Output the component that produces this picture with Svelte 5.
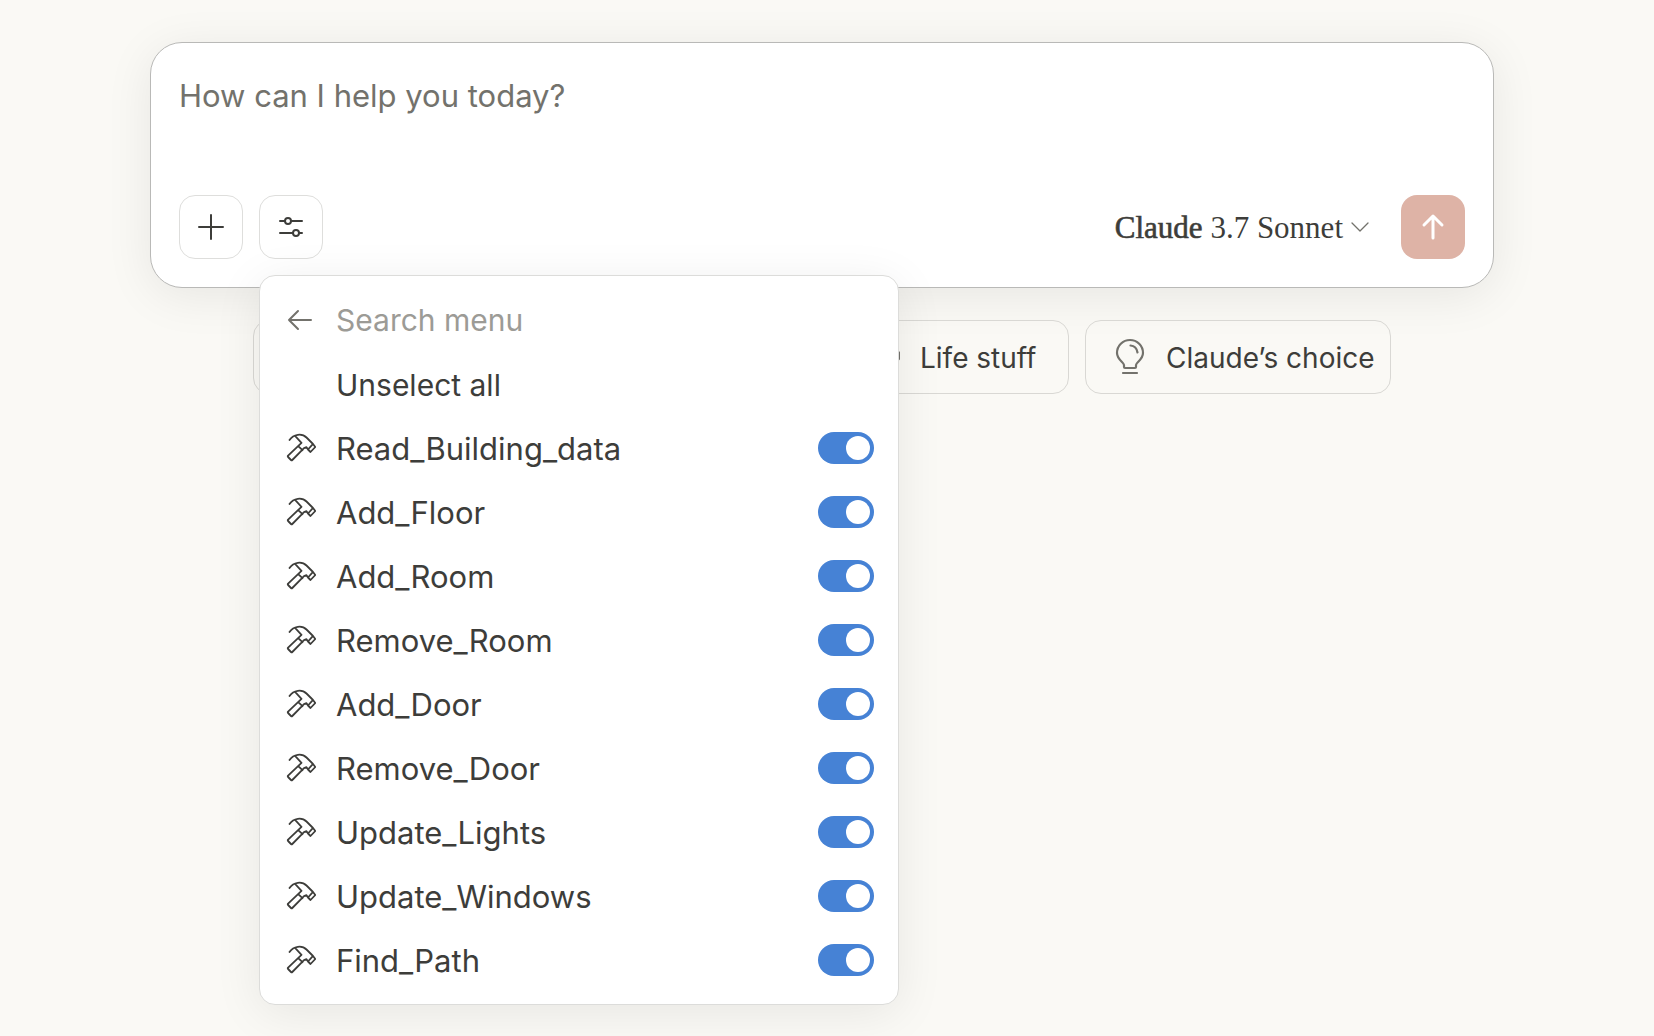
<script>
  let tools = $state(
    [
      'Read_Building_data',
      'Add_Floor',
      'Add_Room',
      'Remove_Room',
      'Add_Door',
      'Remove_Door',
      'Update_Lights',
      'Update_Windows',
      'Find_Path'
    ].map((name) => ({ name, on: true }))
  );
  let prompt = $state('');
  let query = $state('');

  const shown = $derived(tools.filter((t) => t.name.toLowerCase().includes(query.toLowerCase())));

  function unselectAll() {
    for (const tool of tools) tool.on = false;
  }
</script>

<main class="page">
  <form class="composer" onsubmit={(e) => e.preventDefault()}>
    <textarea class="prompt" rows="1" aria-label="Prompt" placeholder="How can I help you today?" bind:value={prompt}></textarea>
    <div class="bar">
      <button type="button" class="square" aria-label="Add content">
        <svg width="32" height="32" viewBox="0 0 32 32"><path d="M16 4v24M4 16h24" stroke-width="2" /></svg>
      </button>
      <div class="anchor">
        <button type="button" class="square" aria-label="Search and tools" aria-expanded="true">
          <svg width="32" height="32" viewBox="0 0 32 32" stroke-width="2">
            <path d="M5 10h5M16 10h11M5 22h13M24 22h3" />
            <circle cx="13" cy="10" r="3" />
            <circle cx="21" cy="22" r="3" />
          </svg>
        </button>
        <div class="menu">
          <div class="row">
            <button type="button" class="back" aria-label="Back">
              <svg width="32" height="32" viewBox="0 0 32 32"><path d="M27 16H5M14 7l-9 9 9 9" stroke-width="2" /></svg>
            </button>
            <input class="search" type="text" aria-label="Search menu" placeholder="Search menu" bind:value={query} />
          </div>
          <button type="button" class="row unselect" onclick={unselectAll}>Unselect all</button>
          {#each shown as tool (tool.name)}
            <label class="row">
              <svg width="32" height="32" viewBox="0 0 32 32" stroke-width="1.8">
                <path d="M5.500 8C9.500 2 18 1 22.500 5.500L29 12L31.300 15L26.500 20L24 17.500L28.800 12.200M24 17.500L22.500 15.200L20 16.200L8.300 28Q7.700 28.600 7 28L4.100 25Q3.500 24.300 4.100 23.700L17.500 10.800L11.300 4.200M14.200 14.200L18.500 18.200" />
              </svg>
              <span class="name">{tool.name}</span>
              <input class="switch" type="checkbox" role="switch" bind:checked={tool.on} />
            </label>
          {/each}
        </div>
      </div>
      <button type="button" class="model">
        <span class="label"><span class="brand">Claude</span> 3.7 Sonnet</span>
        <svg width="18" height="12" viewBox="0 0 18 12"><path d="M1 2l8 8 8-8" stroke-width="1.300" /></svg>
      </button>
      <button type="submit" class="send" aria-label="Send message">
        <svg width="32" height="32" viewBox="0 0 32 32"><path d="M16 27V5M7 14l9-9 9 9" stroke-width="3" /></svg>
      </button>
    </div>
  </form>

  <nav class="chips" aria-label="Suggestions">
    <button type="button" class="chip"><span class="label">Write</span></button>
    <button type="button" class="chip"><span class="label">Learn</span></button>
    <button type="button" class="chip"><span class="label">Code</span></button>
    <button type="button" class="chip">
      <svg width="32" height="40" viewBox="0 0 32 40" stroke-width="2.400">
        <path d="M3 12h22v11q0 8-8 8h-6q-8 0-8-8zM25 14h3q3.500 0 3.500 5t-6.500 5M9 4v4M15 4v4" />
      </svg>
      <span class="label">Life stuff</span>
    </button>
    <button type="button" class="chip">
      <svg width="32" height="40" viewBox="0 0 32 40" stroke-width="2.200">
        <path d="M10 30v-2c0-2.500-7-5.500-7-12a13 13 0 0 1 26 0c0 6.500-7 9.500-7 12v2q0 1-1 1H11q-1 0-1-1zM16.500 8.500q6 .5 7 7M9 36h14" />
      </svg>
      <span class="label">Claude’s choice</span>
    </button>
  </nav>
</main>

<style>
  :global(body) {
    background: #faf9f5;
  }

  .page {
    min-height: 100vh;
    box-sizing: border-box;
    padding: 42px 160px 0 150px;
    color: #3d3d3a;
    font: 30px/40px Inter, 'Noto Sans', sans-serif;
  }

  button,
  input,
  textarea {
    margin: 0;
    padding: 0;
    border: 0;
    background: none;
    color: inherit;
    font: inherit;
  }

  button,
  label {
    cursor: pointer;
  }

  svg {
    display: block;
    flex: none;
    fill: none;
    stroke: currentColor;
    stroke-linecap: round;
    stroke-linejoin: round;
  }

  .composer {
    box-sizing: border-box;
    padding: 33px 28px 28px;
    border: 1px solid #b9b9b7;
    border-radius: 32px;
    background: #fff;
    box-shadow: 0 8px 48px rgb(0 0 0 / 8%);
  }

  .prompt {
    display: block;
    width: 100%;
    height: 88px;
    margin-bottom: 31px;
    font-size: 31px;
    resize: none;
    outline: none;
  }

  .prompt::placeholder {
    color: #73726c;
    opacity: 1;
  }

  .bar {
    display: flex;
    align-items: center;
    gap: 16px;
  }

  .square,
  .send {
    display: grid;
    place-items: center;
    box-sizing: border-box;
    width: 64px;
    height: 64px;
    border-radius: 16px;
  }

  .square {
    border: 1px solid #dededc;
  }

  .send {
    background: #deb3a6;
    color: #fff;
  }

  .anchor {
    position: relative;
  }

  .menu {
    position: absolute;
    z-index: 1;
    top: calc(100% + 16px);
    left: 0;
    box-sizing: border-box;
    width: 640px;
    padding: 12px;
    border: 1px solid #dcdcda;
    border-radius: 16px;
    background: #fff;
    box-shadow: 0 8px 48px rgb(0 0 0 / 8%);
  }

  .row {
    display: flex;
    align-items: center;
    gap: 20px;
    box-sizing: border-box;
    width: 100%;
    height: 64px;
    padding: 0 12px;
  }

  .unselect {
    padding: 2px 12px 0 64px;
  }

  .back {
    color: #73726c;
  }

  .search,
  .name {
    flex: 1;
    min-width: 0;
  }

  .name {
    padding-top: 2px;
    font-size: 31px;
  }

  .label {
    padding-top: 2px;
  }

  .search {
    outline: none;
  }

  .search::placeholder {
    color: #9c9b96;
    opacity: 1;
  }

  .switch {
    appearance: none;
    display: flex;
    box-sizing: border-box;
    width: 56px;
    height: 32px;
    padding: 4px;
    border-radius: 16px;
    background: #c8c7c2;
    cursor: pointer;
  }

  .switch::before {
    content: '';
    width: 24px;
    height: 24px;
    border-radius: 50%;
    background: #fff;
  }

  .switch:checked {
    justify-content: flex-end;
    background: #4682d5;
  }

  .model {
    display: flex;
    align-items: center;
    gap: 8px;
    margin-left: auto;
    padding-right: 16px;
    font: 31px/40px 'Liberation Serif', serif;
  }

  .model svg {
    color: #73726c;
  }

  .brand {
    -webkit-text-stroke: 0.6px currentColor;
  }

  .chips {
    display: grid;
    grid-template-columns: repeat(3, 1fr) 230px 306px;
    gap: 16px;
    max-width: 1138px;
    margin: 32px auto 0;
  }

  .chip {
    display: flex;
    align-items: center;
    gap: 20px;
    box-sizing: border-box;
    height: 74px;
    padding: 0 16px 0 28px;
    border: 1px solid #d9d8d4;
    border-radius: 16px;
    font-size: 28px;
    white-space: nowrap;
  }

  .chip svg {
    color: #73726c;
  }
</style>
